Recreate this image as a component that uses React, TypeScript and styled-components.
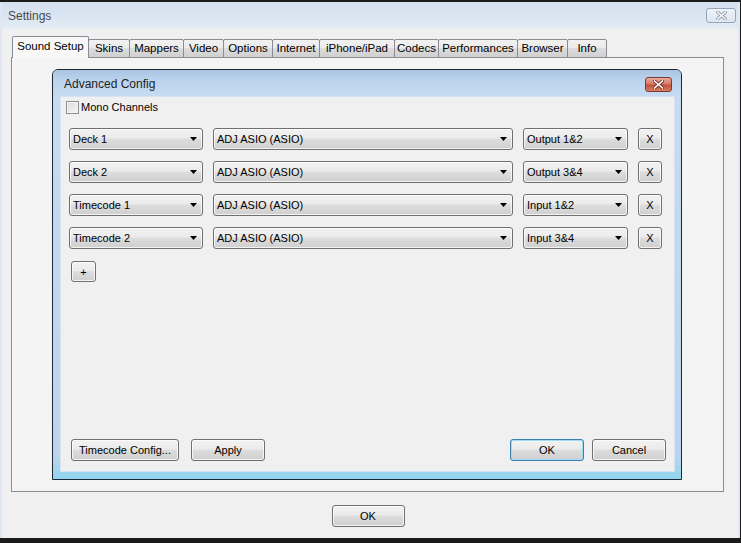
import React from 'react';
import styled, { createGlobalStyle, css } from 'styled-components';

const GlobalStyle = createGlobalStyle`
  html, body {
    margin: 0;
    padding: 0;
    background: #1b1b1b;
  }
  * {
    box-sizing: border-box;
  }
`;

const uiFont = `"Liberation Sans", Arial, sans-serif`;

const buttonFace = css`
  border: 1px solid #707070;
  border-radius: 3px;
  background: linear-gradient(
    to bottom,
    #f2f2f2 0%,
    #ebebeb 45%,
    #dddddd 50%,
    #cfcfcf 100%
  );
  box-shadow: inset 0 0 0 1px rgba(255, 255, 255, 0.75);
`;

const Screen = styled.div`
  width: 741px;
  height: 543px;
  overflow: hidden;
  padding: 2px 1px 5px 0;
  background: #1b1b1b;
  font-family: ${uiFont};
`;

const Window = styled.div`
  height: 536px;
  display: flex;
  flex-direction: column;
  background: #f0f0f0;
  border-left: 2px solid #dfe8f2;
  border-right: 2px solid #dfe8f2;
`;

const TitleBar = styled.div`
  height: 27px;
  flex: 0 0 auto;
  display: flex;
  align-items: center;
  justify-content: space-between;
  padding: 0 2px 0 6px;
  background: linear-gradient(to bottom, #d3e0ef 0%, #dbe6f2 60%, #e4ecf5 100%);
  color: #4a4a4a;
  font-size: 12px;
`;

const WinClose = styled.div`
  width: 30px;
  height: 15px;
  margin-top: -1px;
  display: flex;
  align-items: center;
  justify-content: center;
  border: 1px solid #95a5ba;
  border-radius: 3px;
  background: linear-gradient(to bottom, #eef3f9, #dce5f0);
`;

const Body = styled.div`
  padding: 7px 14px 0 9px;
  display: flex;
  flex-direction: column;
`;

const TabStrip = styled.div`
  display: flex;
  align-items: flex-end;
  padding-left: 1px;
  margin-bottom: -1px;
  position: relative;
  z-index: 2;
`;

const Tab = styled.div<{ $w: number; $active?: boolean }>`
  width: ${(p) => p.$w}px;
  height: ${(p) => (p.$active ? 22 : 19)}px;
  margin-right: -1px;
  display: flex;
  align-items: center;
  justify-content: center;
  font-size: 11.5px;
  color: #000;
  border: 1px solid #898c95;
  border-bottom: ${(p) => (p.$active ? 'none' : '1px solid #898c95')};
  border-radius: 2px 2px 0 0;
  padding-bottom: ${(p) => (p.$active ? 3 : 2)}px;
  background: ${(p) =>
    p.$active
      ? '#f8f8f8'
      : 'linear-gradient(to bottom, #f2f2f2 0%, #ebebeb 45%, #dddddd 50%, #cfcfcf 100%)'};
`;

const TabPanel = styled.div`
  height: 435px;
  border: 1px solid #898c95;
  background: #f4f4f4;
  padding: 11px 41px 11px 40px;
`;

const Dialog = styled.div`
  height: 411px;
  display: flex;
  flex-direction: column;
  border: 1px solid #1e2833;
  border-radius: 6px 6px 0 0;
  background: #bdd5ee;
  overflow: hidden;
`;

const DialogTitle = styled.div`
  height: 26px;
  flex: 0 0 auto;
  display: flex;
  align-items: center;
  justify-content: space-between;
  padding: 2px 9px 0 11px;
  background: linear-gradient(to bottom, #a9c4e2 0%, #bcd3ec 40%, #c6dbf1 100%);
  font-size: 12px;
  color: #1e1e1e;
`;

const RedClose = styled.div`
  width: 27px;
  height: 15px;
  display: flex;
  align-items: center;
  justify-content: center;
  border: 1px solid #7d3a33;
  border-radius: 3px;
  background: linear-gradient(to bottom, #e9a99c 0%, #d77a68 45%, #c4503c 55%, #d77e62 100%);
`;

const Frame = styled.div`
  flex: 1;
  display: flex;
  padding: 0 6px 7px 7px;
  background: linear-gradient(to bottom, #c6dbf1 0%, #bcd4ee 94%, #8fd6ee 100%);
`;

const Content = styled.div`
  flex: 1;
  display: flex;
  flex-direction: column;
  background: #f0f0f0;
  border: 1px solid #d7e3ef;
  font-size: 11px;
  color: #000;
`;

const CheckRow = styled.label`
  display: flex;
  align-items: center;
  gap: 2px;
  margin: 3px 0 0 5px;
  height: 14px;
`;

const CheckBox = styled.span`
  width: 13px;
  height: 13px;
  border: 1px solid #8f8f8f;
  background: linear-gradient(135deg, #dcdcdc, #f6f6f6);
  box-shadow: inset 0 0 0 1px #f4f4f4;
`;

const Rows = styled.div`
  display: flex;
  flex-direction: column;
  gap: 11px;
  margin-top: 14px;
  padding-left: 8px;
`;

const Row = styled.div`
  display: flex;
  align-items: center;
  gap: 10px;
`;

const Combo = styled.div<{ $w: number }>`
  ${buttonFace};
  width: ${(p) => p.$w}px;
  height: 22px;
  display: flex;
  align-items: center;
  justify-content: space-between;
  padding: 0 5px 0 3px;
  white-space: nowrap;
`;

const SmallButton = styled.div<{ $w: number; $h: number }>`
  ${buttonFace};
  width: ${(p) => p.$w}px;
  height: ${(p) => p.$h}px;
  display: flex;
  align-items: center;
  justify-content: center;
  font-size: 11px;
`;

const AddWrap = styled.div`
  margin: 12px 0 0 10px;
`;

const ButtonBar = styled.div`
  margin-top: auto;
  display: flex;
  align-items: center;
  padding: 0 8px 10px 10px;
`;

const Spacer = styled.div`
  flex: 1;
`;

const PushButton = styled.div<{ $w: number; $focused?: boolean }>`
  ${buttonFace};
  width: ${(p) => p.$w}px;
  height: 22px;
  display: flex;
  align-items: center;
  justify-content: center;
  font-size: 11px;
  ${(p) =>
    p.$focused &&
    css`
      border-color: #3c7fb1;
      box-shadow: inset 0 0 0 1px #9fdcf6;
    `}
`;

const ButtonGap = styled.div<{ $w: number }>`
  width: ${(p) => p.$w}px;
`;

const Footer = styled.div`
  flex: 1;
  display: flex;
  justify-content: center;
  padding-top: 13px;
  padding-right: 4px;
`;

const Arrow = () => (
  <svg width="7" height="4" viewBox="0 0 7 4">
    <path d="M0 0 H7 L3.5 4 Z" fill="#000" />
  </svg>
);

const CrossIcon = ({ color, stroke }: { color: string; stroke: string }) => (
  <svg width="11" height="9" viewBox="0 0 11 9">
    <path d="M1.5 1 L9.5 8 M9.5 1 L1.5 8" stroke={stroke} strokeWidth="3.2" strokeLinecap="square" />
    <path d="M1.5 1 L9.5 8 M9.5 1 L1.5 8" stroke={color} strokeWidth="1.6" strokeLinecap="square" />
  </svg>
);

const tabs = [
  { label: 'Sound Setup', w: 77 },
  { label: 'Skins', w: 42 },
  { label: 'Mappers', w: 55 },
  { label: 'Video', w: 41 },
  { label: 'Options', w: 50 },
  { label: 'Internet', w: 48 },
  { label: 'iPhone/iPad', w: 76 },
  { label: 'Codecs', w: 45 },
  { label: 'Performances', w: 80 },
  { label: 'Browser', w: 51 },
  { label: 'Info', w: 40 }
];

const channels = [
  { deck: 'Deck 1', device: 'ADJ ASIO (ASIO)', port: 'Output 1&2' },
  { deck: 'Deck 2', device: 'ADJ ASIO (ASIO)', port: 'Output 3&4' },
  { deck: 'Timecode 1', device: 'ADJ ASIO (ASIO)', port: 'Input 1&2' },
  { deck: 'Timecode 2', device: 'ADJ ASIO (ASIO)', port: 'Input 3&4' }
];

export default function App() {
  return (
    <Screen>
      <GlobalStyle />
      <Window>
        <TitleBar>
          <span>Settings</span>
          <WinClose>
            <CrossIcon color="#f4f6f9" stroke="#8d99a8" />
          </WinClose>
        </TitleBar>
        <Body>
          <TabStrip>
            {tabs.map((t, i) => (
              <Tab key={t.label} $w={t.w} $active={i === 0}>
                {t.label}
              </Tab>
            ))}
          </TabStrip>
          <TabPanel>
            <Dialog>
              <DialogTitle>
                <span>Advanced Config</span>
                <RedClose>
                  <CrossIcon color="#ffffff" stroke="#6e2a22" />
                </RedClose>
              </DialogTitle>
              <Frame>
                <Content>
                  <CheckRow>
                    <CheckBox />
                    <span>Mono Channels</span>
                  </CheckRow>
                  <Rows>
                    {channels.map((c) => (
                      <Row key={c.deck}>
                        <Combo $w={134}>
                          <span>{c.deck}</span>
                          <Arrow />
                        </Combo>
                        <Combo $w={300}>
                          <span>{c.device}</span>
                          <Arrow />
                        </Combo>
                        <Combo $w={105}>
                          <span>{c.port}</span>
                          <Arrow />
                        </Combo>
                        <SmallButton $w={24} $h={22}>X</SmallButton>
                      </Row>
                    ))}
                  </Rows>
                  <AddWrap>
                    <SmallButton $w={25} $h={21}>+</SmallButton>
                  </AddWrap>
                  <ButtonBar>
                    <PushButton $w={108}>Timecode Config...</PushButton>
                    <ButtonGap $w={12} />
                    <PushButton $w={74}>Apply</PushButton>
                    <Spacer />
                    <PushButton $w={74} $focused>OK</PushButton>
                    <ButtonGap $w={8} />
                    <PushButton $w={74}>Cancel</PushButton>
                  </ButtonBar>
                </Content>
              </Frame>
            </Dialog>
          </TabPanel>
        </Body>
        <Footer>
          <PushButton $w={73}>OK</PushButton>
        </Footer>
      </Window>
    </Screen>
  );
}
